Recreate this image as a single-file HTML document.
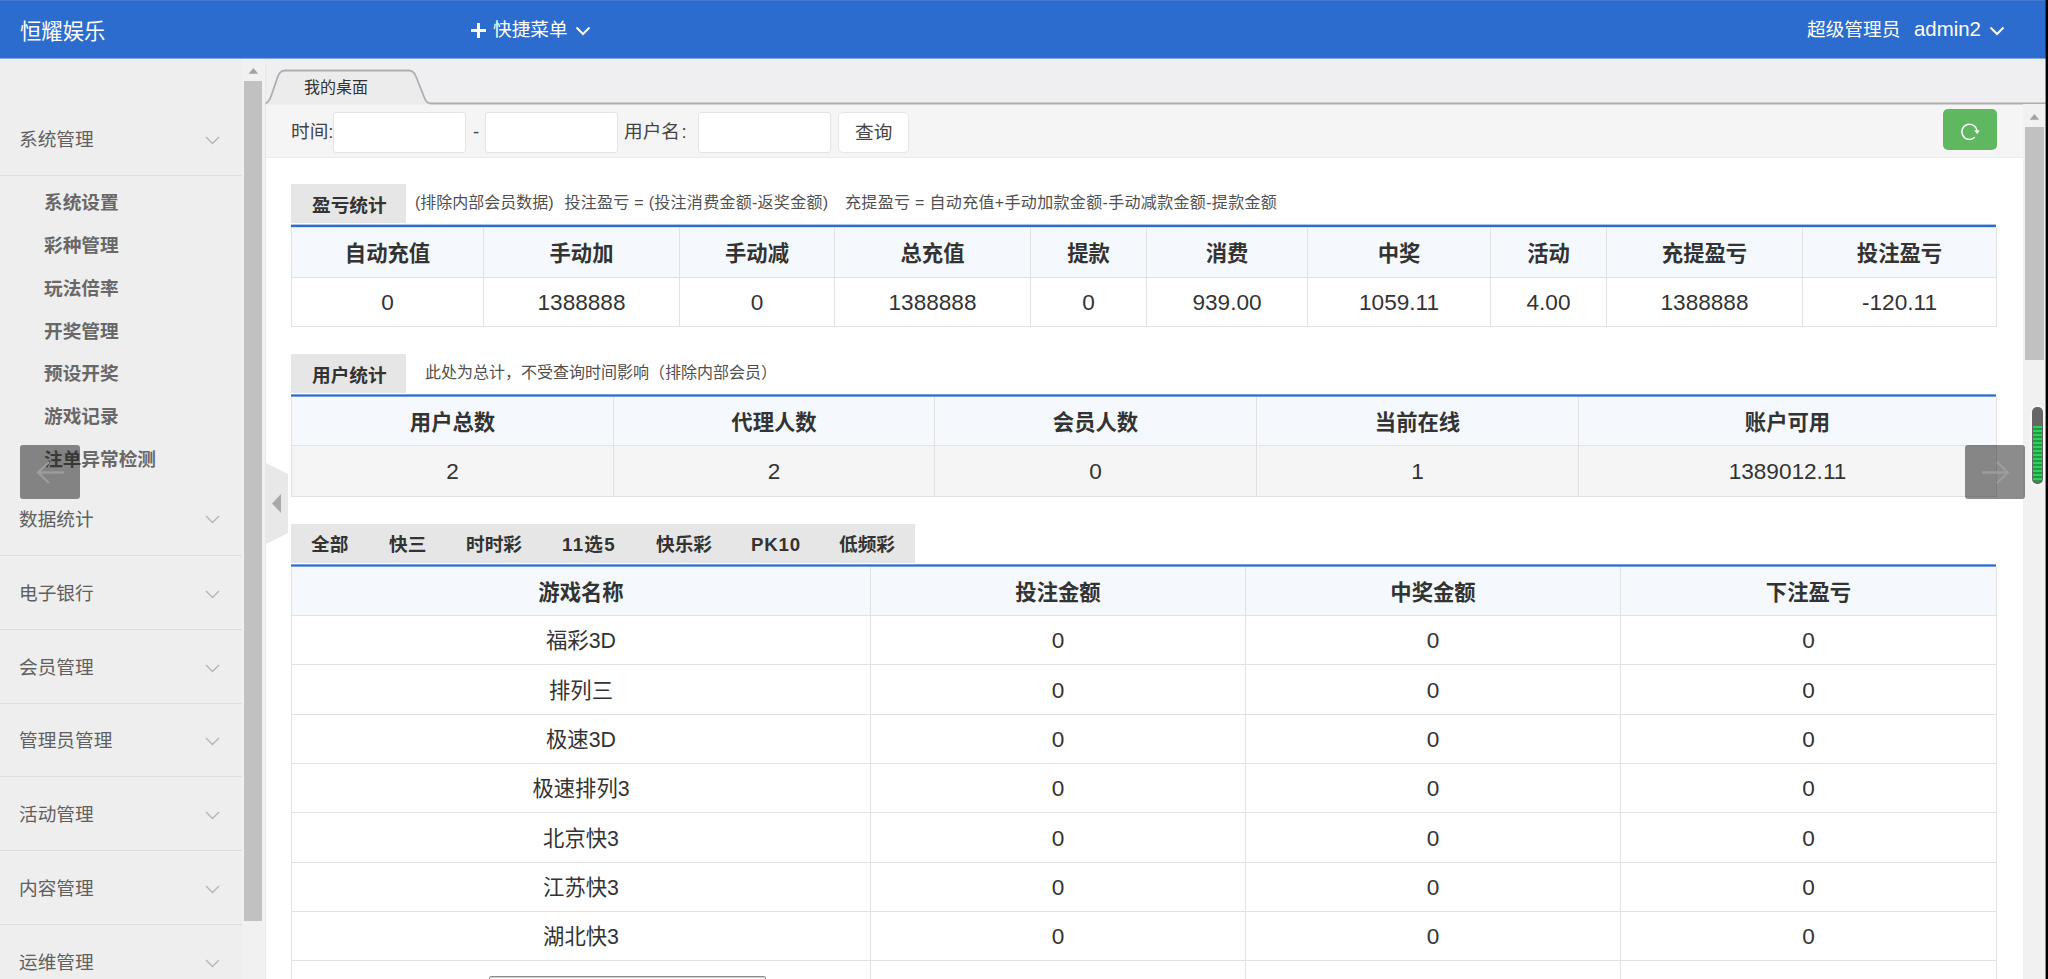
<!DOCTYPE html>
<html lang="zh-CN">
<head>
<meta charset="utf-8">
<title>恒耀娱乐</title>
<style>
*{box-sizing:border-box;margin:0;padding:0}
html,body{width:2048px;height:979px;overflow:hidden;background:#fff}
body{position:relative;font-family:"Liberation Sans","Noto Sans CJK SC",sans-serif;color:#333;font-size:18.67px;line-height:1}
.abs,.a{position:absolute}
#hd{position:absolute;left:0;top:0;width:2048px;height:58px;background:#2d6ccf;color:#fff;border-top:1px solid #4279d3}
#hd .t{position:absolute;white-space:nowrap;line-height:24px}
#sb{position:absolute;left:0;top:58px;width:242px;height:921px;background:#eeeeee}
#sbtrack{position:absolute;left:242px;top:58px;width:24px;height:921px;background:#f1f1f1}
#sbthumb{position:absolute;left:244px;top:81px;width:18px;height:840px;background:#c1c1c1}
.mi{position:absolute;left:19px;font-size:18.67px;color:#606060;white-space:nowrap;line-height:24px}
.si{position:absolute;left:44px;font-size:18.67px;color:#686868;font-weight:bold;white-space:nowrap;line-height:24px}
.dv{position:absolute;left:0;width:242px;height:1px;background:#dddddd}
.chev{position:absolute;left:205px;width:15px;height:9px}
#tabbar{position:absolute;left:266px;top:58px;width:1780px;height:46px;background:#efeff1}
#filter{position:absolute;left:266px;top:104px;width:1757px;height:54px;background:#f5f5f5;border-bottom:1px solid #ebebeb}
.inp{position:absolute;top:112px;height:41px;width:133px;background:#fff;border:1px solid #e4e4e4;border-radius:3px}
.lb{position:absolute;white-space:nowrap;font-size:18.67px;color:#444;line-height:24px}
.sec{position:absolute;left:291px;width:115px;height:39px;background:#e6e6e6}
.sect{position:absolute;font-weight:bold;font-size:18.67px;line-height:24px;color:#333;white-space:nowrap}
.desc{position:absolute;font-size:16px;color:#505050;white-space:nowrap;line-height:20px}
.bl{position:absolute;left:291px;width:1705px;background:#2d6ccf}
.hl{position:absolute;height:1px;background:#e2e2e2}
.vl{position:absolute;width:1px;background:#e2e2e2}
.bg{position:absolute}
.c{position:absolute;text-align:center;white-space:nowrap;font-size:21.33px;line-height:30px;height:30px;color:#333}
.h{font-weight:bold}
.n{font-size:22.6px}
.tb{position:absolute;font-weight:bold;font-size:18.67px;line-height:24px;white-space:nowrap;color:#333}
</style>
</head>
<body>
<div id="hd">
<div class="t" style="left:20px;top:18.5px;font-size:21.33px">恒耀娱乐</div>
<div class="t" style="left:493px;top:17px;font-size:18.67px">快捷菜单</div>
<div class="t" style="left:1807px;top:17px;font-size:18.67px">超级管理员</div>
<div class="t" style="left:1914px;top:16px;font-size:20.4px">admin2</div>
<svg class="a" style="left:470px;top:21px" width="17" height="17" viewBox="0 0 17 17"><path d="M8.5 1v15M1 8.5h15" stroke="#fff" stroke-width="3" fill="none"/></svg>
<svg class="a" style="left:575px;top:25px" width="16" height="10" viewBox="0 0 16 10"><path d="M1.5 1.500l6.500 6.500 6.500-6.500" stroke="#fff" stroke-width="2" fill="none"/></svg>
<svg class="a" style="left:1989px;top:25px" width="16" height="10" viewBox="0 0 16 10"><path d="M1.500 1.500l6.500 6.500 6.500-6.500" stroke="#fff" stroke-width="2" fill="none"/></svg>
</div>
<div class="a" style="left:0;top:58px;width:2048px;height:1px;background:#2d6ccf;opacity:0.55;z-index:5"></div>
<div id="sb"></div>
<div class="mi" style="top:128.4px">系统管理</div>
<svg class="chev" style="top:136.3px" viewBox="0 0 15 9"><path d="M1 1l6.500 6.500L14 1" stroke="#b5b5b5" stroke-width="1.400" fill="none"/></svg>
<div class="mi" style="top:507.5px">数据统计</div>
<svg class="chev" style="top:515.4px" viewBox="0 0 15 9"><path d="M1 1l6.500 6.500L14 1" stroke="#b5b5b5" stroke-width="1.400" fill="none"/></svg>
<div class="mi" style="top:581.8px">电子银行</div>
<svg class="chev" style="top:589.7px" viewBox="0 0 15 9"><path d="M1 1l6.500 6.500L14 1" stroke="#b5b5b5" stroke-width="1.400" fill="none"/></svg>
<div class="mi" style="top:655.6px">会员管理</div>
<svg class="chev" style="top:663.5px" viewBox="0 0 15 9"><path d="M1 1l6.500 6.500L14 1" stroke="#b5b5b5" stroke-width="1.400" fill="none"/></svg>
<div class="mi" style="top:729.1px">管理员管理</div>
<svg class="chev" style="top:737.0px" viewBox="0 0 15 9"><path d="M1 1l6.500 6.500L14 1" stroke="#b5b5b5" stroke-width="1.400" fill="none"/></svg>
<div class="mi" style="top:802.8px">活动管理</div>
<svg class="chev" style="top:810.7px" viewBox="0 0 15 9"><path d="M1 1l6.500 6.500L14 1" stroke="#b5b5b5" stroke-width="1.400" fill="none"/></svg>
<div class="mi" style="top:876.8px">内容管理</div>
<svg class="chev" style="top:884.7px" viewBox="0 0 15 9"><path d="M1 1l6.500 6.500L14 1" stroke="#b5b5b5" stroke-width="1.400" fill="none"/></svg>
<div class="mi" style="top:950.8px">运维管理</div>
<svg class="chev" style="top:958.7px" viewBox="0 0 15 9"><path d="M1 1l6.500 6.500L14 1" stroke="#b5b5b5" stroke-width="1.400" fill="none"/></svg>
<div class="si" style="top:191.0px">系统设置</div>
<div class="si" style="top:234.0px">彩种管理</div>
<div class="si" style="top:276.6px">玩法倍率</div>
<div class="si" style="top:319.5px">开奖管理</div>
<div class="si" style="top:362.0px">预设开奖</div>
<div class="si" style="top:404.7px">游戏记录</div>
<div class="si" style="top:447.6px">注单异常检测</div>
<div class="dv" style="top:175px"></div>
<div class="dv" style="top:555px"></div>
<div class="dv" style="top:629px"></div>
<div class="dv" style="top:703px"></div>
<div class="dv" style="top:776px"></div>
<div class="dv" style="top:850px"></div>
<div class="dv" style="top:924px"></div>
<div id="sbtrack"></div><div id="sbthumb"></div>
<svg class="a" style="left:248px;top:67px" width="11" height="7" viewBox="0 0 11 7"><path d="M0.600 6.800L5.400 0.900 10.200 6.800z" fill="#a3a3a3"/></svg>
<div class="a" style="left:265px;top:59px;width:1px;height:920px;background:#e9e9e9"></div>
<div id="tabbar"></div><div id="filter"></div>
<svg class="a" style="left:266px;top:463px" width="22" height="81" viewBox="0 0 22 81"><path d="M0 0L22 11V70L0 81z" fill="#e8e8e8"/><path d="M15 31L6 40.500 15 50z" fill="#a9a9a9"/></svg>
<svg class="a" style="left:264px;top:66px" width="1784" height="40" viewBox="0 0 1784 40">
<path d="M1.500 38.500C5 36.500 6.500 32 7.500 29L13 13C14.500 8.500 16 5 21 5H145C149 5 150.500 7 152 10.500L160.500 32C162 36 163.500 38.500 167 38.500z" fill="#ececec"/>
<path d="M1.500 37.500C5 36.500 6.500 32 7.500 29L13 13C14.500 8.500 16 4.500 21 4.500H145C149 4.500 150.500 7 152 10.500L160.500 32C162 36 163.500 37.500 167 37.500H1782" fill="none" stroke="#aeaeae" stroke-width="1.800"/>
</svg>
<div class="a" style="left:304px;top:78px;font-size:16px;line-height:20px;color:#333;white-space:nowrap">我的桌面</div>
<div class="lb" style="left:291px;top:120.3px">时间:</div>
<div class="inp" style="left:333px"></div>
<div class="lb" style="left:473px;top:120.3px">-</div>
<div class="inp" style="left:485px"></div>
<div class="lb" style="left:624px;top:120.3px">用户名<span style="margin-left:1.5px">:</span></div>
<div class="inp" style="left:698px"></div>
<div class="inp" style="left:838px;width:71px;border-radius:5px;border-color:#e6e6e6"></div>
<div class="lb" style="left:855px;top:121px;color:#444">查询</div>
<div class="a" style="left:1943px;top:109px;width:54px;height:41px;background:#5fb85f;border-radius:5px"></div>
<svg class="a" style="left:1958px;top:120px" width="24" height="24" viewBox="0 0 24 24"><path d="M19 11.800A7.600 7.600 0 1 0 16.770 17.170" fill="none" stroke="#fff" stroke-width="1.450"/><path d="M16.300 10.200L21.500 10.600 19.100 14.200z" fill="#fff"/></svg>
<div class="a" style="left:2023px;top:104px;width:23px;height:875px;background:#f1f1f1"></div>
<div class="a" style="left:2025px;top:127px;width:19px;height:233px;background:#c1c1c1"></div>
<svg class="a" style="left:2029px;top:113px" width="11" height="7" viewBox="0 0 11 7"><path d="M0.600 6.800L5.400 0.900 10.200 6.800z" fill="#a3a3a3"/></svg>
<div class="sec" style="top:184px"></div><div class="sect" style="left:312px;top:194px">盈亏统计</div>
<div class="desc" style="left:415px;top:193px">(排除内部会员数据)</div><div class="desc" style="left:564.5px;top:193px;letter-spacing:0.28px">投注盈亏 = (投注消费金额-返奖金额)</div><div class="desc" style="left:845px;top:193px;letter-spacing:0.33px">充提盈亏 = 自动充值+手动加款金额-手动减款金额-提款金额</div>
<div class="bg" style="left:291px;top:228px;width:1706px;height:49px;background:#f5f9fd"></div>
<div class="hl" style="left:291px;top:277px;width:1706px"></div>
<div class="hl" style="left:291px;top:326px;width:1706px"></div>
<div class="vl" style="left:291px;top:228px;height:99px"></div>
<div class="vl" style="left:483px;top:228px;height:99px"></div>
<div class="vl" style="left:679px;top:228px;height:99px"></div>
<div class="vl" style="left:834px;top:228px;height:99px"></div>
<div class="vl" style="left:1030px;top:228px;height:99px"></div>
<div class="vl" style="left:1146px;top:228px;height:99px"></div>
<div class="vl" style="left:1307px;top:228px;height:99px"></div>
<div class="vl" style="left:1490px;top:228px;height:99px"></div>
<div class="vl" style="left:1606px;top:228px;height:99px"></div>
<div class="vl" style="left:1802px;top:228px;height:99px"></div>
<div class="vl" style="left:1996px;top:228px;height:99px"></div>
<div class="bl" style="top:224px;height:1px;opacity:0.4"></div>
<div class="bl" style="top:225px;height:1px;opacity:1"></div>
<div class="bl" style="top:226px;height:1px;opacity:1"></div>
<div class="bl" style="top:227px;height:1px;opacity:0.2"></div>
<div class="c h" style="left:292px;width:191px;top:239.0px">自动充值</div>
<div class="c h" style="left:484px;width:195px;top:239.0px">手动加</div>
<div class="c h" style="left:680px;width:154px;top:239.0px">手动减</div>
<div class="c h" style="left:835px;width:195px;top:239.0px">总充值</div>
<div class="c h" style="left:1031px;width:115px;top:239.0px">提款</div>
<div class="c h" style="left:1147px;width:160px;top:239.0px">消费</div>
<div class="c h" style="left:1308px;width:182px;top:239.0px">中奖</div>
<div class="c h" style="left:1491px;width:115px;top:239.0px">活动</div>
<div class="c h" style="left:1607px;width:195px;top:239.0px">充提盈亏</div>
<div class="c h" style="left:1803px;width:193px;top:239.0px">投注盈亏</div>
<div class="c n" style="left:292px;width:191px;top:288.0px">0</div>
<div class="c n" style="left:484px;width:195px;top:288.0px">1388888</div>
<div class="c n" style="left:680px;width:154px;top:288.0px">0</div>
<div class="c n" style="left:835px;width:195px;top:288.0px">1388888</div>
<div class="c n" style="left:1031px;width:115px;top:288.0px">0</div>
<div class="c n" style="left:1147px;width:160px;top:288.0px">939.00</div>
<div class="c n" style="left:1308px;width:182px;top:288.0px">1059.11</div>
<div class="c n" style="left:1491px;width:115px;top:288.0px">4.00</div>
<div class="c n" style="left:1607px;width:195px;top:288.0px">1388888</div>
<div class="c n" style="left:1803px;width:193px;top:288.0px">-120.11</div>
<div class="sec" style="top:354px"></div><div class="sect" style="left:312px;top:364px">用户统计</div>
<div class="desc" style="left:425px;top:363px">此处为总计，不受查询时间影响（排除内部会员）</div>
<div class="bg" style="left:291px;top:397px;width:1706px;height:48px;background:#f5f9fd"></div>
<div class="bg" style="left:291px;top:445px;width:1706px;height:51px;background:#f5f5f5"></div>
<div class="hl" style="left:291px;top:445px;width:1706px"></div>
<div class="hl" style="left:291px;top:496px;width:1706px"></div>
<div class="vl" style="left:291px;top:397px;height:100px"></div>
<div class="vl" style="left:613px;top:397px;height:100px"></div>
<div class="vl" style="left:934px;top:397px;height:100px"></div>
<div class="vl" style="left:1256px;top:397px;height:100px"></div>
<div class="vl" style="left:1578px;top:397px;height:100px"></div>
<div class="vl" style="left:1996px;top:397px;height:100px"></div>
<div class="bl" style="top:394px;height:1px;opacity:0.65"></div>
<div class="bl" style="top:395px;height:1px;opacity:1"></div>
<div class="bl" style="top:396px;height:1px;opacity:0.65"></div>
<div class="c h" style="left:292px;width:321px;top:408.0px">用户总数</div>
<div class="c h" style="left:614px;width:320px;top:408.0px">代理人数</div>
<div class="c h" style="left:935px;width:321px;top:408.0px">会员人数</div>
<div class="c h" style="left:1257px;width:321px;top:408.0px">当前在线</div>
<div class="c h" style="left:1579px;width:417px;top:408.0px">账户可用</div>
<div class="c n" style="left:292px;width:321px;top:456.5px">2</div>
<div class="c n" style="left:614px;width:320px;top:456.5px">2</div>
<div class="c n" style="left:935px;width:321px;top:456.5px">0</div>
<div class="c n" style="left:1257px;width:321px;top:456.5px">1</div>
<div class="c n" style="left:1579px;width:417px;top:456.5px">1389012.11</div>
<div class="a" style="left:291px;top:524px;width:624px;height:39px;background:#e6e6e6"></div>
<div class="tb" style="left:311px;top:533px;">全部</div>
<div class="tb" style="left:389px;top:533px;">快三</div>
<div class="tb" style="left:466px;top:533px;">时时彩</div>
<div class="tb" style="left:562px;top:533px;letter-spacing:1.3px;">11选5</div>
<div class="tb" style="left:656px;top:533px;">快乐彩</div>
<div class="tb" style="left:751px;top:533px;letter-spacing:0.8px;">PK10</div>
<div class="tb" style="left:839px;top:533px;">低频彩</div>
<div class="bg" style="left:291px;top:567px;width:1706px;height:48px;background:#f5f9fd"></div>
<div class="hl" style="left:291px;top:615px;width:1706px"></div>
<div class="hl" style="left:291px;top:664px;width:1706px"></div>
<div class="hl" style="left:291px;top:714px;width:1706px"></div>
<div class="hl" style="left:291px;top:763px;width:1706px"></div>
<div class="hl" style="left:291px;top:812px;width:1706px"></div>
<div class="hl" style="left:291px;top:862px;width:1706px"></div>
<div class="hl" style="left:291px;top:911px;width:1706px"></div>
<div class="hl" style="left:291px;top:960px;width:1706px"></div>
<div class="vl" style="left:291px;top:567px;height:413px"></div>
<div class="vl" style="left:870px;top:567px;height:413px"></div>
<div class="vl" style="left:1245px;top:567px;height:413px"></div>
<div class="vl" style="left:1620px;top:567px;height:413px"></div>
<div class="vl" style="left:1996px;top:567px;height:413px"></div>
<div class="bl" style="top:564px;height:1px;opacity:0.65"></div>
<div class="bl" style="top:565px;height:1px;opacity:1"></div>
<div class="bl" style="top:566px;height:1px;opacity:0.65"></div>
<div class="c h" style="left:292px;width:578px;top:578.0px">游戏名称</div>
<div class="c h" style="left:871px;width:374px;top:578.0px">投注金额</div>
<div class="c h" style="left:1246px;width:374px;top:578.0px">中奖金额</div>
<div class="c h" style="left:1621px;width:375px;top:578.0px">下注盈亏</div>
<div class="c" style="left:292px;width:578px;top:626.4px">福彩3D</div>
<div class="c n" style="left:871px;width:374px;top:626.4px">0</div>
<div class="c n" style="left:1246px;width:374px;top:626.4px">0</div>
<div class="c n" style="left:1621px;width:375px;top:626.4px">0</div>
<div class="c" style="left:292px;width:578px;top:675.9px">排列三</div>
<div class="c n" style="left:871px;width:374px;top:675.9px">0</div>
<div class="c n" style="left:1246px;width:374px;top:675.9px">0</div>
<div class="c n" style="left:1621px;width:375px;top:675.9px">0</div>
<div class="c" style="left:292px;width:578px;top:725.4px">极速3D</div>
<div class="c n" style="left:871px;width:374px;top:725.4px">0</div>
<div class="c n" style="left:1246px;width:374px;top:725.4px">0</div>
<div class="c n" style="left:1621px;width:375px;top:725.4px">0</div>
<div class="c" style="left:292px;width:578px;top:774.4px">极速排列3</div>
<div class="c n" style="left:871px;width:374px;top:774.4px">0</div>
<div class="c n" style="left:1246px;width:374px;top:774.4px">0</div>
<div class="c n" style="left:1621px;width:375px;top:774.4px">0</div>
<div class="c" style="left:292px;width:578px;top:823.9px">北京快3</div>
<div class="c n" style="left:871px;width:374px;top:823.9px">0</div>
<div class="c n" style="left:1246px;width:374px;top:823.9px">0</div>
<div class="c n" style="left:1621px;width:375px;top:823.9px">0</div>
<div class="c" style="left:292px;width:578px;top:873.4px">江苏快3</div>
<div class="c n" style="left:871px;width:374px;top:873.4px">0</div>
<div class="c n" style="left:1246px;width:374px;top:873.4px">0</div>
<div class="c n" style="left:1621px;width:375px;top:873.4px">0</div>
<div class="c" style="left:292px;width:578px;top:922.4px">湖北快3</div>
<div class="c n" style="left:871px;width:374px;top:922.4px">0</div>
<div class="c n" style="left:1246px;width:374px;top:922.4px">0</div>
<div class="c n" style="left:1621px;width:375px;top:922.4px">0</div>
<div class="c" style="left:292px;width:578px;top:973.9px">安徽快3</div>
<div class="c n" style="left:871px;width:374px;top:973.9px">0</div>
<div class="c n" style="left:1246px;width:374px;top:973.9px">0</div>
<div class="c n" style="left:1621px;width:375px;top:973.9px">0</div>
<div class="a" style="left:20px;top:445px;width:60px;height:54px;background:rgba(0,0,0,0.45);border-radius:3px"></div>
<svg class="a" style="left:36px;top:458px" width="30" height="28" viewBox="0 0 30 28"><path d="M27 14.500H2M12.500 4.500L2 14.500l10.500 10" fill="none" stroke="#9c9c9c" stroke-width="2.400" stroke-linecap="round" stroke-linejoin="round"/></svg>
<div class="a" style="left:1965px;top:445px;width:60px;height:54px;background:rgba(0,0,0,0.45);border-radius:3px"></div>
<svg class="a" style="left:1980px;top:458px" width="30" height="28" viewBox="0 0 30 28"><path d="M3 14.500H28M17.500 4.500l10.500 10-10.500 10" fill="none" stroke="#9c9c9c" stroke-width="2.400" stroke-linecap="round" stroke-linejoin="round"/></svg>
<div class="a" style="left:2032px;top:407px;width:11px;height:77px;border-radius:5px;background:#666;box-shadow:0 0 3px 1px rgba(255,255,255,0.9);overflow:hidden"><div style="position:absolute;left:1px;right:1px;top:19px;bottom:2px;background:repeating-linear-gradient(#2fd05c 0 2px,#1f9a44 2px 4px)"></div></div>
<div class="a" style="left:489px;top:976px;width:277px;height:10px;background:#fff;border:1px solid #8e8e8e;border-radius:2px 2px 0 0"><div style="height:1px;background:#cfcfcf"></div></div>
<div class="a" style="left:2045px;top:0;width:1px;height:979px;background:rgba(0,0,0,0.4);z-index:9"></div><div class="a" style="left:2046px;top:0;width:2px;height:979px;background:#000;z-index:9"></div>
</body>
</html>
